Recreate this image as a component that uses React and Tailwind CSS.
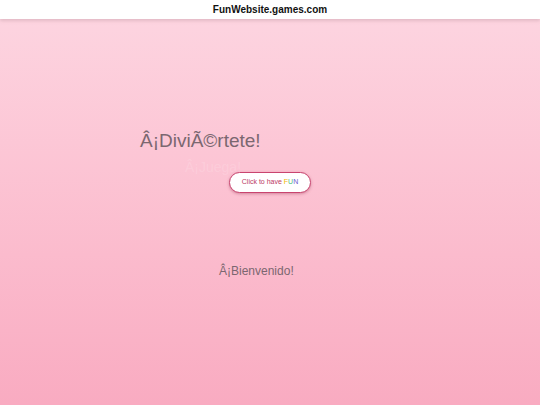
import React from "react";

const App = () => {
  return (
    <div className="flex flex-col min-h-[405px] font-['Liberation_Sans',Arial,sans-serif]">
      {/* top bar */}
      <header className="relative z-10 flex justify-center items-center h-[19px] bg-white shadow-[0_2px_3px_rgba(180,140,150,0.35)]">
        <h1 className="text-[10px] font-bold text-[#111]">FunWebsite.games.com</h1>
      </header>

      <main className="flex flex-col flex-1 bg-gradient-to-b from-[#fdd4e0] to-[#f9abc1]">
        <h2 className="mt-[109px] ml-[140px] text-[19px] leading-[26px] text-[#7b6770]">Â¡DiviÃ©rtete!</h2>

        <p className="mt-[5px] ml-[185px] text-[14px] leading-[17px] text-white/15">Â¡Juega!</p>

        <div className="relative flex justify-center -mt-[4px]">
          <button className="h-[21px] px-[12px] rounded-full bg-white border border-[#c9446f] shadow-[0_1px_3px_rgba(160,60,90,0.45)] text-[7px] text-[#bb3a64]">
            Click to have{" "}
            <span className="text-[#f2b705]">F</span>
            <span className="text-[#4cc07a]">U</span>
            <span className="text-[#6a5acd]">N</span>
          </button>
        </div>

        <p className="mt-[70px] ml-[219px] text-[12px] leading-[16px] text-[#7b6770]">Â¡Bienvenido!</p>
      </main>
    </div>
  );
};

export default App;
